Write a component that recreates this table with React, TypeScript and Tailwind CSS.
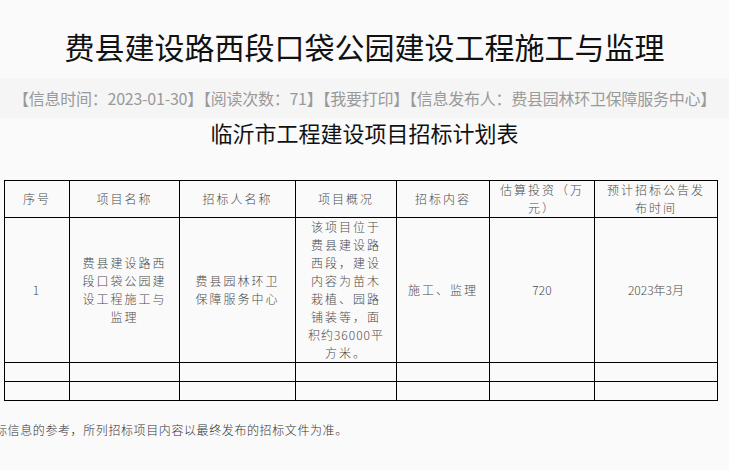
import React from "react";

const cjk = { fontFamily: '"Noto Sans CJK SC", "Noto Sans", sans-serif' };

const cell = "border border-black px-[10px] text-center align-middle whitespace-nowrap";

export default function App() {
  return (
    <div className="w-[729px] h-[470px] overflow-hidden bg-[#fafafa] text-[#222]" style={cjk}>
      <div className="h-[78px] pt-[28px] text-center text-[30px] leading-[36px] text-[#111]">
        费县建设路西段口袋公园建设工程施工与监理
      </div>
      <div className="h-[40px] bg-[#f5f5f5] flex items-center justify-center text-[16px] text-[#9a9a9a] tracking-[-0.25px]">
        【信息时间：2023-01-30】【阅读次数：71】【我要打印】【信息发布人：费县园林环卫保障服务中心】
      </div>
      <div className="text-center text-[22px] leading-[26px] text-[#111] mt-px">临沂市工程建设项目招标计划表</div>
      <table className="ml-[4px] mt-[35px] w-[713px] border-collapse table-fixed text-[12px] leading-[18px] tracking-[2px] text-[#4a4a4a] font-light">
        <colgroup>
          <col className="w-[65px]" />
          <col className="w-[110px]" />
          <col className="w-[116px]" />
          <col className="w-[101px]" />
          <col className="w-[93px]" />
          <col className="w-[105px]" />
          <col className="w-[123px]" />
        </colgroup>
        <tbody>
          <tr className="h-[37px]">
            <td className={cell}>序号</td>
            <td className={cell}>项目名称</td>
            <td className={cell}>招标人名称</td>
            <td className={cell}>项目概况</td>
            <td className={cell}>招标内容</td>
            <td className={cell}>估算投资（万<br />元）</td>
            <td className={cell}>预计招标公告发<br />布时间</td>
          </tr>
          <tr className="h-[145px]">
            <td className={cell}>1</td>
            <td className={cell}>费县建设路西<br />段口袋公园建<br />设工程施工与<br />监理</td>
            <td className={cell}>费县园林环卫<br />保障服务中心</td>
            <td className={cell + " !px-0"}>该项目位于<br />费县建设路<br />西段，建设<br />内容为苗木<br />栽植、园路<br />铺装等，面<br /><span className="tracking-[1px]">积约36000平</span><br />方米。</td>
            <td className={cell}>施工、监理</td>
            <td className={cell + " tracking-normal"}>720</td>
            <td className={cell + " tracking-normal"}>2023年3月</td>
          </tr>
          <tr className="h-[19px]">
            {[0, 1, 2, 3, 4, 5, 6].map((i) => (
              <td key={i} className="border border-black"></td>
            ))}
          </tr>
          <tr className="h-[19px]">
            {[0, 1, 2, 3, 4, 5, 6].map((i) => (
              <td key={i} className="border border-black"></td>
            ))}
          </tr>
        </tbody>
      </table>
      <p className="ml-[-5px] mt-[20px] text-[12px] leading-[18px] tracking-[0.6px] text-[#333] font-light whitespace-nowrap">
        标信息的参考，所列招标项目内容以最终发布的招标文件为准。
      </p>
    </div>
  );
}
